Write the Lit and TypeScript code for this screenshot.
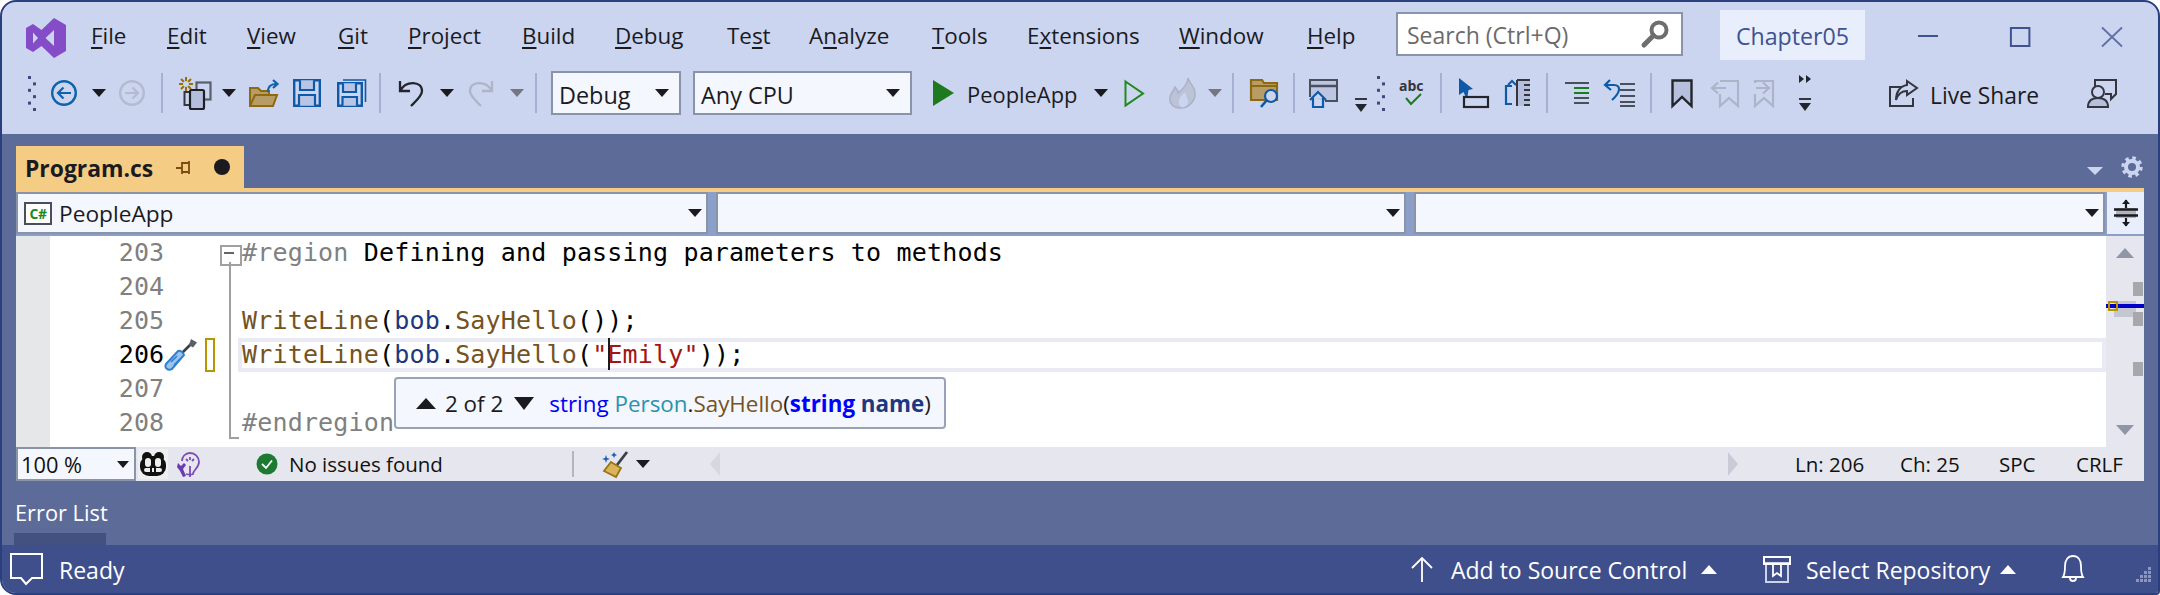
import { LitElement, html, css, svg, TemplateResult } from "lit";
import { customElement } from "lit/decorators.js";

type Item = [number, TemplateResult | string];

/* A row of slots: each slot is as wide as the distance to the next item's start. */
function slots(items: Item[], origin: number, end: number) {
  return items.map((it, i) => {
    const next = i + 1 < items.length ? items[i + 1][0] : end;
    const first = i === 0 ? it[0] - origin : 0;
    return html`<div class="slot" style="width:${next - it[0]}px;margin-left:${first}px">${it[1]}</div>`;
  });
}

const ico = (w: number, h: number, body: unknown) =>
  html`<svg class="ico" width=${w} height=${h} viewBox="0 0 ${w} ${h}">${body}</svg>`;

const tri = (w: number, h: number, c: string, up = false) =>
  ico(w, h, svg`<path d=${up ? `M0 ${h}L${w / 2} 0L${w} ${h}Z` : `M0 0L${w} 0L${w / 2} ${h}Z`} fill=${c}/>`);

const caret = tri(14, 8, "#1b1b1f");
const sep = html`<div class="sep"></div>`;

const grip = ico(10, 36, svg`<g fill="#3f4a78">${[0, 1, 2, 3, 4, 5].map(
  (i) => svg`<rect x=${i % 2 ? 6 : 1} y=${i * 6.4 + 1} width="3" height="3"/>`
)}</g>`);

const back = ico(26, 26, svg`<circle cx="13" cy="13" r="11.8" fill="none" stroke="#0f62ac" stroke-width="2.4"/>
  <path d="M20 13H7M12.5 7.5L7 13L12.5 18.5" fill="none" stroke="#0f62ac" stroke-width="2.2"/>`);
const fwd = ico(26, 26, svg`<circle cx="13" cy="13" r="11.8" fill="none" stroke="#b4bbcf" stroke-width="2.4"/>
  <path d="M6 13H19M13.5 7.5L19 13L13.5 18.5" fill="none" stroke="#b4bbcf" stroke-width="2.2"/>`);

const newProj = ico(34, 33, svg`
  <g stroke="#996f00" stroke-width="2"><path d="M8 0V14M1 7H15M3 2L13 12M13 2L3 12"/></g>
  <circle cx="8" cy="7" r="3" fill="#ccd5f0"/>
  <rect x="18.5" y="5.5" width="14" height="17" fill="#ccd5f0" stroke="#5a5f6b" stroke-width="2.2"/>
  <path d="M12 28H6.5V15H12" fill="none" stroke="#33363f" stroke-width="2"/>
  <rect x="12" y="13" width="14" height="19" rx="1.5" fill="#b3bedd" stroke="#1f2027" stroke-width="2.2"/>`);

const openF = ico(30, 29, svg`
  <path d="M1 27V9H9L12 12H20V16H28L24 27Z" fill="#b89c66" stroke="#8c6a12" stroke-width="2"/>
  <path d="M1 27L6 16H28" fill="none" stroke="#8c6a12" stroke-width="2"/>
  <path d="M19 13C19 7 22 5 28 5M24 1L28.5 5L24 9" fill="none" stroke="#0f62ac" stroke-width="2.2"/>`);

const save = ico(28, 28, svg`
  <path d="M1.2 1.2H26.8V26.8H1.2Z" fill="#ccd5f0" stroke="#0f5aa8" stroke-width="2.4"/>
  <path d="M7 1.2V11H21V1.2M6 26.8V16H22V26.8" fill="#b9c5e6" stroke="#0f5aa8" stroke-width="2.2"/>`);
const saveAll = ico(30, 28, svg`
  <path d="M6 1H28.5V23" fill="none" stroke="#0f5aa8" stroke-width="1.6"/>
  <path d="M1.2 4.2H24.8V26.8H1.2Z" fill="#ccd5f0" stroke="#0f5aa8" stroke-width="2.4"/>
  <path d="M6 4.2V13H19V4.2M5.5 26.8V18H20V26.8" fill="#b9c5e6" stroke="#0f5aa8" stroke-width="2.2"/>`);

const undoP = "M2 2V12H12M2 12C8 1 24 2 24 12C24 17 18 22 13 27";
const undo = ico(26, 28, svg`<path d=${undoP} fill="none" stroke="#23252c" stroke-width="2.3"/>`);
const redo = ico(26, 28, svg`<g transform="translate(26 0) scale(-1 1)"><path d=${undoP} fill="none" stroke="#aeb5c8" stroke-width="2.3"/></g>`);

const play = ico(21, 26, svg`<path d="M0 0L21 13L0 26Z" fill="#1e7a1e"/>`);
const playO = ico(21, 27, svg`<path d="M1.5 1.5L19 13.5L1.5 25.5Z" fill="none" stroke="#1e8a1e" stroke-width="2"/>`);
const flame = ico(28, 32, svg`
  <path d="M20 1C21 6 26 8 27 15C28 24 21 31 12 31C5 31 1 26 2 20C3 15 6 14 7 10C9 12 10 14 10 16C14 13 19 9 20 1Z" fill="#bcc3d6" stroke="#aab2c8" stroke-width="1.5"/>
  <path d="M13 30C8 26 12 19 17 15C18 21 22 23 19 28C17 30 15 31 13 30Z" fill="#ccd5f0"/>`);
const folderS = ico(30, 30, svg`
  <path d="M1 2H12L14 5H27V22H1Z" fill="#b89c66" stroke="#8c6a12" stroke-width="2.2"/>
  <path d="M1 8H27" stroke="#8c6a12" stroke-width="2"/>
  <circle cx="21" cy="18" r="6" fill="#ccd5f0" stroke="#0f5aa8" stroke-width="2.2"/>
  <path d="M16.5 22.5L11 29" stroke="#0f5aa8" stroke-width="2.6"/>`);
const homeW = ico(30, 29, svg`
  <path d="M1 18V1H28V22H16" fill="#bcc6e3" stroke="#4a4f5c" stroke-width="2"/>
  <path d="M1 7H28" stroke="#4a4f5c" stroke-width="2.4"/>
  <path d="M1 21L9 13L17 21M4 19V28H14V19" fill="#ccd5f0" stroke="#0f5aa8" stroke-width="2.2"/>`);
const overflow = ico(14, 15, svg`<rect x="1" y="0" width="12" height="2" fill="#33363f"/><path d="M1 6H13L7 14Z" fill="#23252c"/>`);
const abc = ico(28, 26, svg`<text x="0" y="11" font-family="Open Sans" font-weight="700" font-size="14" fill="#33363f">abc</text>
  <path d="M7 18L12 24L22 14" fill="none" stroke="#1e7a1e" stroke-width="2"/>`);

const cursor = ico(32, 30, svg`
  <path d="M1 0V17L5.5 14L9 22L10.5 12L15 11Z" fill="#0f5aa8"/>
  <rect x="6" y="19" width="24" height="10" fill="#ccd5f0" stroke="#23252c" stroke-width="2.2"/>`);
const list = ico(28, 28, svg`
  <path d="M9 7H3V25H9" fill="none" stroke="#0f5aa8" stroke-width="2.2"/>
  <path d="M2 4L6 0L10 4" transform="translate(3 2)" fill="none" stroke="#0f5aa8" stroke-width="2"/>
  <rect x="14" y="1" width="13" height="26" fill="#b6c0dc"/>
  <g stroke="#33363f" stroke-width="2"><path d="M14 1H27M21 6H27M21 11H27M21 16H27M21 21H27M21 26H27M14 1V27"/></g>`);
const indentG = ico(26, 24, svg`<g stroke-width="2.2">
  <path d="M0 2H11M9 2H24M9 22H24" stroke="#4a4f5c"/>
  <path d="M9 7H24M9 12H24" stroke="#1e7a1e"/>
  <path d="M9 17H24" stroke="#4a4f5c"/></g>`);
const indentB = ico(32, 28, svg`
  <path d="M6 1L1 6L7 11M2 6H10C17 6 17 13 8 21" fill="none" stroke="#0f5aa8" stroke-width="2.2"/>
  <g stroke="#4a4f5c" stroke-width="2.2"><path d="M16 5H31M16 11H31M16 17H31M16 23H31M16 27H31"/></g>`);
const bookmark = (c: string, f: string) => ico(22, 29, svg`<path d="M1.5 1.5H20.5V27L11 18L1.5 27Z" fill=${f} stroke=${c} stroke-width="2.4"/>`);
const bmPrev = ico(28, 29, svg`<g fill="none" stroke="#adb4c8" stroke-width="2.2"><path d="M9 2H27V27L18 19L9 27V15"/><path d="M15 9H2M7 3.5L1 9L7 14.5"/></g>`);
const bmNext = ico(28, 29, svg`<g fill="none" stroke="#adb4c8" stroke-width="2.2"><path d="M2 15V27L11 19L20 27V2H2V4"/><path d="M3 9H16M10 3.5L16 9L10 14.5"/></g>`);
const overflow2 = ico(14, 36, svg`
  <path d="M1 0L6 4L1 8ZM8 0L13 4L8 8Z" fill="#23252c"/>
  <rect x="1" y="23" width="12" height="2" fill="#33363f"/><path d="M1 28H13L7 36Z" fill="#23252c"/>`);
const share = ico(28, 27, svg`
  <path d="M13 7H1V26H24V18" fill="none" stroke="#33363f" stroke-width="2"/>
  <path d="M18 1L28 8L18 15V11C13 11 9 14 7 20C7 12 11 6 18 5Z" fill="#ccd5f0" stroke="#33363f" stroke-width="2"/>`);
const person = ico(30, 29, svg`
  <path d="M8 8V1H29V15L24 20V15H18" fill="#ccd5f0" stroke="#33363f" stroke-width="2"/>
  <path d="M1 28C1 22 4 19 11 19C18 19 21 22 21 28Z" fill="#b6c0dc" stroke="#33363f" stroke-width="2"/>
  <circle cx="11" cy="13" r="6" fill="#ccd5f0" stroke="#33363f" stroke-width="2"/>`);

const logo = ico(40, 40, svg`<path fill-rule="evenodd" fill="#854cc7"
  d="M28 0L40 7V33L28 40L15.5 28L7 34L0 30V10L7 6L15.5 12ZM7 14.5V25.5L12 20ZM28 12L19.5 20L28 28Z"/>`);
const magnifier = ico(28, 28, svg`
  <circle cx="18" cy="10" r="7.5" fill="none" stroke="#6e6e6e" stroke-width="4"/>
  <path d="M12.5 15.5L3 25" stroke="#6e6e6e" stroke-width="5" stroke-linecap="round"/>`);
const winMin = ico(22, 20, svg`<rect x="1" y="8" width="20" height="2" fill="#3f5391"/>`);
const winMax = ico(22, 20, svg`<rect x="1.9" y="1" width="18.5" height="18" fill="none" stroke="#3f5391" stroke-width="2"/>`);
const winClose = ico(22, 20, svg`<path d="M1 0.5L21 19.5M21 0.5L1 19.5" stroke="#5f70a8" stroke-width="1.8"/>`);

const pin = ico(16, 15, svg`<path d="M0 8H6M6 2V14M6 3H13V12H6M13 1V14" fill="none" stroke="#7b4b10" stroke-width="1.8"/>`);
const gear = ico(22, 22, svg`
  <circle cx="11" cy="11" r="9" fill="none" stroke="#ccd5f0" stroke-width="3.4" stroke-dasharray="3.5 3.57"/>
  <circle cx="11" cy="11" r="6" fill="none" stroke="#ccd5f0" stroke-width="4"/>`);
const split = ico(24, 28, svg`
  <rect x="2" y="9" width="20" height="10" fill="#b0b4bd"/>
  <path d="M0 10.5H24M0 16.5H24" stroke="#1b1b1f" stroke-width="2.6"/>
  <path d="M12 1V9M12 19V27" stroke="#1b1b1f" stroke-width="2.2"/>
  <path d="M8 5L12 0.5L16 5ZM8 23L12 27.5L16 23Z" fill="#1b1b1f"/>`);
const driver = ico(34, 34, svg`
  <path d="M16 17L27 6" stroke="#3c3f46" stroke-width="2.6"/>
  <path d="M25 7L27 1L33 4.5L29 9.5Z" fill="#5c5f66"/>
  <path d="M2 26L14 13C16 12 19 14 20 17L8 31C4 33 0 30 2 26Z" fill="#9cc3ee" stroke="#2f7fd0" stroke-width="2"/>
  <path d="M7 24L13 18M10 27L16 21" stroke="#2f7fd0" stroke-width="1.5"/>`);

const pig = ico(26, 24, svg`
  <circle cx="7" cy="5" r="5" fill="#111"/><circle cx="19" cy="5" r="5" fill="#111"/>
  <rect x="0" y="4" width="26" height="20" rx="9" fill="#111"/>
  <rect x="5" y="6" width="6" height="9" rx="3" fill="#eee"/><rect x="15" y="6" width="6" height="9" rx="3" fill="#eee"/>
  <rect x="4" y="16" width="18" height="4" rx="2" fill="#eee"/><rect x="10" y="16" width="2" height="4" fill="#111"/><rect x="14" y="16" width="2" height="4" fill="#111"/>`);
const bulb = ico(24, 25, svg`<g fill="none" stroke="#7b4bb8" stroke-width="1.8">
  <path d="M10 22C13 23 15 23 17 22C17 18 23 16 23 10C23 5 19 1 14 1C9 1 6 5 6 9"/>
  <path d="M14 5V8M10 7L12 9M18 7L16 9M14 14V25"/></g>
  <path d="M2 11L5 14L8 11L10 13L7 17L10 24L7 25L4 19L1 15Z" fill="#6a3bb0"/>`);
const okIcon = ico(22, 22, svg`<circle cx="11" cy="11" r="10.5" fill="#1e7a32"/><path d="M6 11L10 15L16 7.5" fill="none" stroke="#fff" stroke-width="1.8"/>`);
const brush = ico(28, 27, svg`
  <path d="M26 1L16 14" stroke="#3c3f46" stroke-width="2.8"/>
  <path d="M10 11L20 17L15 26L3 20Z" fill="#d9b45c" stroke="#9a7412" stroke-width="1.8"/>
  <path d="M5 4L6 7L9 8L6 9L5 12L4 9L1 8L4 7ZM13 1L14 3L16 4L14 5L13 7L12 5L10 4L12 3Z" fill="#1f5fb8"/>`);
const bubble = ico(34, 32, svg`<path d="M1 1H32V25H22L16 31L11 25H1Z" fill="none" stroke="#fff" stroke-width="2"/>`);
const upArrow = ico(24, 26, svg`<path d="M12 26V2M2 12L12 2L22 12" fill="none" stroke="#fff" stroke-width="1.8"/>`);
const repo = ico(28, 27, svg`
  <rect x="3" y="7" width="22" height="19" fill="none" stroke="#cdd3ea" stroke-width="2"/>
  <rect x="1" y="1" width="26" height="7" fill="none" stroke="#fff" stroke-width="2"/>
  <path d="M10 9V20L14 17L18 20V9" fill="none" stroke="#fff" stroke-width="1.8"/>`);
const bell = ico(26, 28, svg`<path d="M3 22C5 19 5 16 5 11C5 5 8 1 13 1C18 1 21 5 21 11C21 16 21 19 23 22ZM10 23C10 27 16 27 16 23" fill="none" stroke="#fff" stroke-width="1.8"/>`);
const sizer = html`<div class="grip-corner">${ico(22, 16, svg`<g fill="#8c96bb">${[
  [18, 0], [18, 4], [14, 4], [18, 8], [14, 8], [10, 8], [18, 12], [14, 12], [10, 12], [6, 12],
].map(([x, y]) => svg`<rect x=${x} y=${y} width="3" height="3"/>`)}</g>`)}</div>`;

const m = (pre: string, u: string, post: string) => html`<span class="menu">${pre}<u>${u}</u>${post}</span>`;
const st = (s: string) => html`<span class="sbtext">${s}</span>`;

@customElement("app-root")
export class AppRoot extends LitElement {
  static styles = css`
    :host { display: block; width: 2160px; height: 595px; background: #fff; overflow: hidden;
      font-family: "Open Sans", "Noto Sans", sans-serif; font-size: 22.4px; color: #1b1b1f; }
    * { box-sizing: border-box; }
    .ico { display: block; flex: none; overflow: visible; }
    .window { height: 595px; border: 2px solid #2b3f7e; border-radius: 16px 16px 4px 16px;
      display: flex; flex-direction: column; overflow: hidden; background: #ccd5f0; }
    .slot { flex: none; display: flex; align-items: center; white-space: nowrap; height: 100%; }
    .title { height: 70px; display: flex; align-items: center; flex: none; }
    .menu { margin-bottom: 4px; }
    .menu u { text-underline-offset: 3px; text-decoration-thickness: 1.5px; }
    .logo { margin-top: 2px; }
    .search { width: 287px; height: 44px; margin-bottom: 7px; background: #fff; border: 2px solid #8a94a8;
      display: flex; align-items: center; justify-content: space-between; padding: 0 12px 0 9px; color: #6b6b6b; font-size: 23px; }
    .search span { padding-top: 2px; }
    .project { width: 145px; height: 50px; margin-bottom: 4px; padding-top: 2px; background: #e8eefc; color: #3f5391; font-size: 23.2px;
      display: flex; align-items: center; justify-content: center; }
    .toolbar { height: 42px; flex: none; display: flex; align-items: center; margin-bottom: 20px; }
    .sep { width: 2px; height: 40px; background: #a5b1d2; }
    .tbtext { font-size: 21.9px; padding-top: 3px; }
    .live { font-size: 22.8px; padding-top: 5px; }
    .combo { height: 44px; background: #f4f7fe; border: 2px solid #8a94a8; display: flex; font-size: 23.4px;
      align-items: center; justify-content: space-between; padding: 0 10px 0 6px; }
    .combo span { padding-top: 4px; }
    .lower { margin-top: 24px; }
    .body { flex: 1; background: #5d6b99; padding: 0 14px; display: flex; flex-direction: column; min-height: 0; }
    .tabstrip { height: 54px; flex: none; display: flex; align-items: flex-end; justify-content: space-between; }
    .tab { width: 228px; height: 42px; background: #f5cc84; display: flex; align-items: center; padding: 0 0 0 9px; }
    .tab b { font-weight: 700; width: 151px; font-size: 22.9px; padding-top: 2px; }
    .dot { width: 16px; height: 16px; border-radius: 50%; background: #1b1b1f; margin-left: 22px; }
    .tabtools { display: flex; align-items: center; gap: 18px; height: 42px; margin-right: 1px; }
    .tabtools .ico:first-child { margin-top: 8px; }
    .accent { height: 4px; flex: none; background: #f5cc84; }
    .nav { height: 44px; flex: none; display: flex; background: #8c9fc8; }
    .nav-combo { height: 42px; background: #f4f7fe; border: 2px solid #8a94a8; display: flex; align-items: center;
      justify-content: space-between; padding: 0 4px 0 6px; flex: none; }
    .nav-combo .left { display: flex; align-items: center; gap: 7px; font-size: 22.7px; }
    .cs { width: 28px; height: 23px; border: 2px solid #4a4f5c; background: #fff; color: #1e8a1e; font-weight: 700;
      font-size: 14px; display: flex; align-items: center; justify-content: center; letter-spacing: -0.5px; }
    .splitbtn { flex: 1; margin-left: 2px; height: 42px; background: #e8eefc; display: flex; align-items: center; justify-content: center; }
    .editor { height: 211px; flex: none; background: #fff; display: flex; position: relative; overflow: hidden; }
    .margin { width: 34px; flex: none; background: #e6e7e8; }
    .lines { flex: 1; min-width: 0; }
    .row { height: 34px; display: flex; font-family: "DejaVu Sans Mono", monospace; font-size: 25px; line-height: 34px; }
    .num { width: 114px; flex: none; text-align: right; color: #808080; }
    .num.on { color: #000; }
    .adorn { width: 65px; flex: none; display: flex; align-items: center; }
    .adorn .mark { width: 10px; height: 34px; border: 2px solid #b89500; margin-left: 7px; }
    .fold { width: 9px; flex: none; position: relative; }
    .fold.line { border-left: 2px solid #a0a0a0; }
    .fold.box::before { content: ""; position: absolute; left: -9px; top: 9px; width: 18px; height: 17px;
      border: 2px solid #a0a0a0; background: #fff; }
    .fold.box::after { content: ""; position: absolute; left: -5px; top: 16px; width: 10px; height: 2px; background: #666; }
    .fold.box .tail { position: absolute; left: 0; top: 26px; bottom: 0; width: 2px; background: #a0a0a0; }
    .fold.end .corner { position: absolute; left: 0; top: 0; width: 10px; height: 33px;
      border-left: 2px solid #a0a0a0; border-bottom: 2px solid #a0a0a0; }
    .code { flex: 1; padding-left: 4px; white-space: pre; color: #000; position: relative; letter-spacing: 0.17px; }
    .code.cur { box-shadow: inset 0 0 0 4px #e9eaf4; }
    .caret { position: absolute; left: 370px; top: 0; width: 2px; height: 32px; background: #1b1b1f; }
    .c-m { color: #74531f; } .c-v { color: #1f377f; } .c-s { color: #a31515; } .c-g { color: #808080; }
    .scroll { width: 38px; flex: none; background: #e6e7ee; position: relative; }
    .scroll > .up { position: absolute; left: 10px; top: 12px; }
    .scroll > .down { position: absolute; left: 10px; bottom: 12px; }
    .mk { position: absolute; left: 27px; width: 10px; height: 14px; background: #a8a8ac; }
    .thumb { position: absolute; left: 8px; top: 65px; width: 22px; height: 16px; background: #c4c6d0; }
    .blue { position: absolute; left: 0; top: 68px; width: 38px; height: 4px; background: #0000c8; }
    .ysq { position: absolute; left: 2px; top: 65px; width: 10px; height: 10px; border: 2px solid #b89500; }
    .popup { position: absolute; left: 378px; top: 141px; width: 552px; height: 52px; background: #f4f7fe;
      border: 2px solid #9aa3b5; border-radius: 4px; display: flex; align-items: center; padding-left: 20px;
      font-size: 22.4px; white-space: nowrap; }
    .popup .count { margin: 0 11px 0 9px; }
    .popup .sig { margin-left: 15px; }
    .kw { color: #0000ff; } .ty { color: #2b91af; } .me { color: #74531f; } .pv { color: #1f377f; }
    .estatus { height: 34px; flex: none; background: #e6e7ee; display: flex; align-items: center; color: #111; font-size: 20.5px; }
    .zoomc { width: 120px; height: 34px; background: #f4f7fe; border: 2px solid #8a94a8; display: flex; font-size: 21.8px;
      align-items: center; justify-content: space-between; padding: 0 5px 0 3px; }
    .pigbox { background: #efeff2; height: 30px; width: 30px; display: flex; align-items: center; justify-content: center; }
    .vsep { width: 2px; height: 26px; background: #b5b6bc; }
    .errors { height: 64px; flex: none; margin-left: -2px; display: flex; flex-direction: column; justify-content: flex-end; color: #fff; font-size: 21.8px; }
    .errors .lbl { padding: 0 0 6px 1px; }
    .errors .bar { width: 92px; height: 12px; background: #435180; }
    .statusbar { height: 48px; flex: none; background: #3f4f8c; display: flex; align-items: center; color: #fff; font-size: 23px; }
    .sbtext { padding-top: 2px; }
    .grip-corner { margin-top: 12px; }
  `;

  render() {
    const menuItems: Item[] = [
      [26, html`<div class="logo">${logo}</div>`],
      [91, m("", "F", "ile")], [167, m("", "E", "dit")], [247, m("", "V", "iew")], [338, m("", "G", "it")],
      [408, m("", "P", "roject")], [522, m("", "B", "uild")], [615, m("", "D", "ebug")], [727, m("Te", "s", "t")],
      [809, m("A", "n", "alyze")], [932, m("", "T", "ools")], [1027, m("E", "x", "tensions")],
      [1179, m("", "W", "indow")], [1307, m("", "H", "elp")],
      [1396, html`<div class="search"><span>Search (Ctrl+Q)</span>${magnifier}</div>`],
      [1720, html`<div class="project">Chapter05</div>`],
      [1917, winMin], [2009, winMax], [2101, winClose],
    ];
    const toolItems: Item[] = [
      [27, grip], [51, back], [92, caret], [119, fwd], [161, sep], [178, newProj], [222, caret], [249, openF],
      [293, save], [337, saveAll], [379, sep], [398, undo], [440, caret], [468, redo], [510, tri(14, 8, "#74777f")],
      [535, sep],
      [551, html`<div class="combo" style="width:130px"><span>Debug</span>${caret}</div>`],
      [693, html`<div class="combo" style="width:219px"><span>Any CPU</span>${caret}</div>`],
      [933, play], [967, html`<span class="tbtext">PeopleApp</span>`], [1094, caret], [1124, playO], [1168, flame], [1208, tri(14, 8, "#74777f")],
      [1232, sep], [1250, folderS], [1293, sep], [1309, homeW], [1354, html`<div class="lower">${overflow}</div>`],
      [1376, grip], [1399, abc], [1440, sep], [1458, cursor], [1503, list], [1546, sep], [1565, indentG],
      [1604, indentB], [1650, sep], [1671, bookmark("#23252c", "#b6c0dc")], [1711, bmPrev], [1753, bmNext],
      [1798, overflow2], [1889, share], [1930, html`<span class="live">Live Share</span>`], [2087, person],
    ];
    const statusItems: Item[] = [
      [16, html`<div class="zoomc"><span>100 %</span>${tri(12, 7, "#1b1b1f")}</div>`],
      [138, html`<div class="pigbox">${pig}</div>`], [176, bulb], [256, okIcon], [289, "No issues found"],
      [572, html`<div class="vsep"></div>`], [601, brush], [636, caret],
      [710, ico(10, 24, svg`<path d="M10 0L0 12L10 24Z" fill="#d6d7df"/>`)],
      [1728, ico(10, 24, svg`<path d="M0 0L10 12L0 24Z" fill="#c9cad6"/>`)],
      [1795, "Ln: 206"], [1900, "Ch: 25"], [1999, "SPC"], [2076, "CRLF"],
    ];
    const barItems: Item[] = [
      [10, bubble], [59, st("Ready")], [1410, upArrow], [1451, st("Add to Source Control")], [1701, tri(16, 9, "#fff", true)],
      [1763, repo], [1806, st("Select Repository")], [2000, tri(16, 9, "#fff", true)], [2060, bell], [2130, sizer],
    ];
    return html`
      <div class="window">
        <div class="title">${slots(menuItems, 2, 2158)}</div>
        <div class="toolbar">${slots(toolItems, 2, 2158)}</div>
        <div class="body">
          <div class="tabstrip">
            <div class="tab"><b>Program.cs</b>${pin}<div class="dot"></div></div>
            <div class="tabtools">${tri(16, 8, "#ccd5f0")}${gear}</div>
          </div>
          <div class="accent"></div>
          <div class="nav">
            <div class="nav-combo" style="width:692px"><span class="left"><span class="cs">C#</span>PeopleApp</span>${caret}</div>
            <div class="nav-combo" style="width:690px;margin-left:8px"><span></span>${caret}</div>
            <div class="nav-combo" style="width:691px;margin-left:8px"><span></span>${caret}</div>
            <div class="splitbtn">${split}</div>
          </div>
          <div class="editor">
            <div class="margin"></div>
            <div class="lines">
              <div class="row"><div class="num">203</div><div class="adorn"></div><div class="fold box"><div class="tail"></div></div>
                <div class="code"><span class="c-g">#region</span> Defining and passing parameters to methods</div></div>
              <div class="row"><div class="num">204</div><div class="adorn"></div><div class="fold line"></div><div class="code"></div></div>
              <div class="row"><div class="num">205</div><div class="adorn"></div><div class="fold line"></div>
                <div class="code"><span class="c-m">WriteLine</span>(<span class="c-v">bob</span>.<span class="c-m">SayHello</span>());</div></div>
              <div class="row"><div class="num on">206</div><div class="adorn">${driver}<div class="mark"></div></div><div class="fold line"></div>
                <div class="code cur"><span class="c-m">WriteLine</span>(<span class="c-v">bob</span>.<span class="c-m">SayHello</span>(<span class="c-s">"Emily"</span>));<span class="caret"></span></div></div>
              <div class="row"><div class="num">207</div><div class="adorn"></div><div class="fold line"></div><div class="code"></div></div>
              <div class="row"><div class="num">208</div><div class="adorn"></div><div class="fold end"><div class="corner"></div></div>
                <div class="code c-g">#endregion</div></div>
            </div>
            <div class="scroll">
              <div class="up">${tri(18, 10, "#9095a8", true)}</div>
              <div class="mk" style="top:46px"></div>
              <div class="thumb"></div>
              <div class="mk" style="top:76px"></div>
              <div class="mk" style="top:126px"></div>
              <div class="blue"></div>
              <div class="ysq"></div>
              <div class="down">${tri(18, 10, "#9095a8")}</div>
            </div>
            <div class="popup">
              ${tri(20, 11, "#1b1b1f", true)}<span class="count">2 of 2</span>${tri(20, 13, "#1b1b1f")}
              <span class="sig"><span class="kw">string</span> <span class="ty">Person</span>.<span class="me">SayHello</span>(<b class="kw">string</b> <b class="pv">name</b>)</span>
            </div>
          </div>
          <div class="estatus">${slots(statusItems, 16, 2144)}</div>
          <div class="errors"><div class="lbl">Error List</div><div class="bar"></div></div>
        </div>
        <div class="statusbar">${slots(barItems, 2, 2158)}</div>
      </div>`;
  }
}
